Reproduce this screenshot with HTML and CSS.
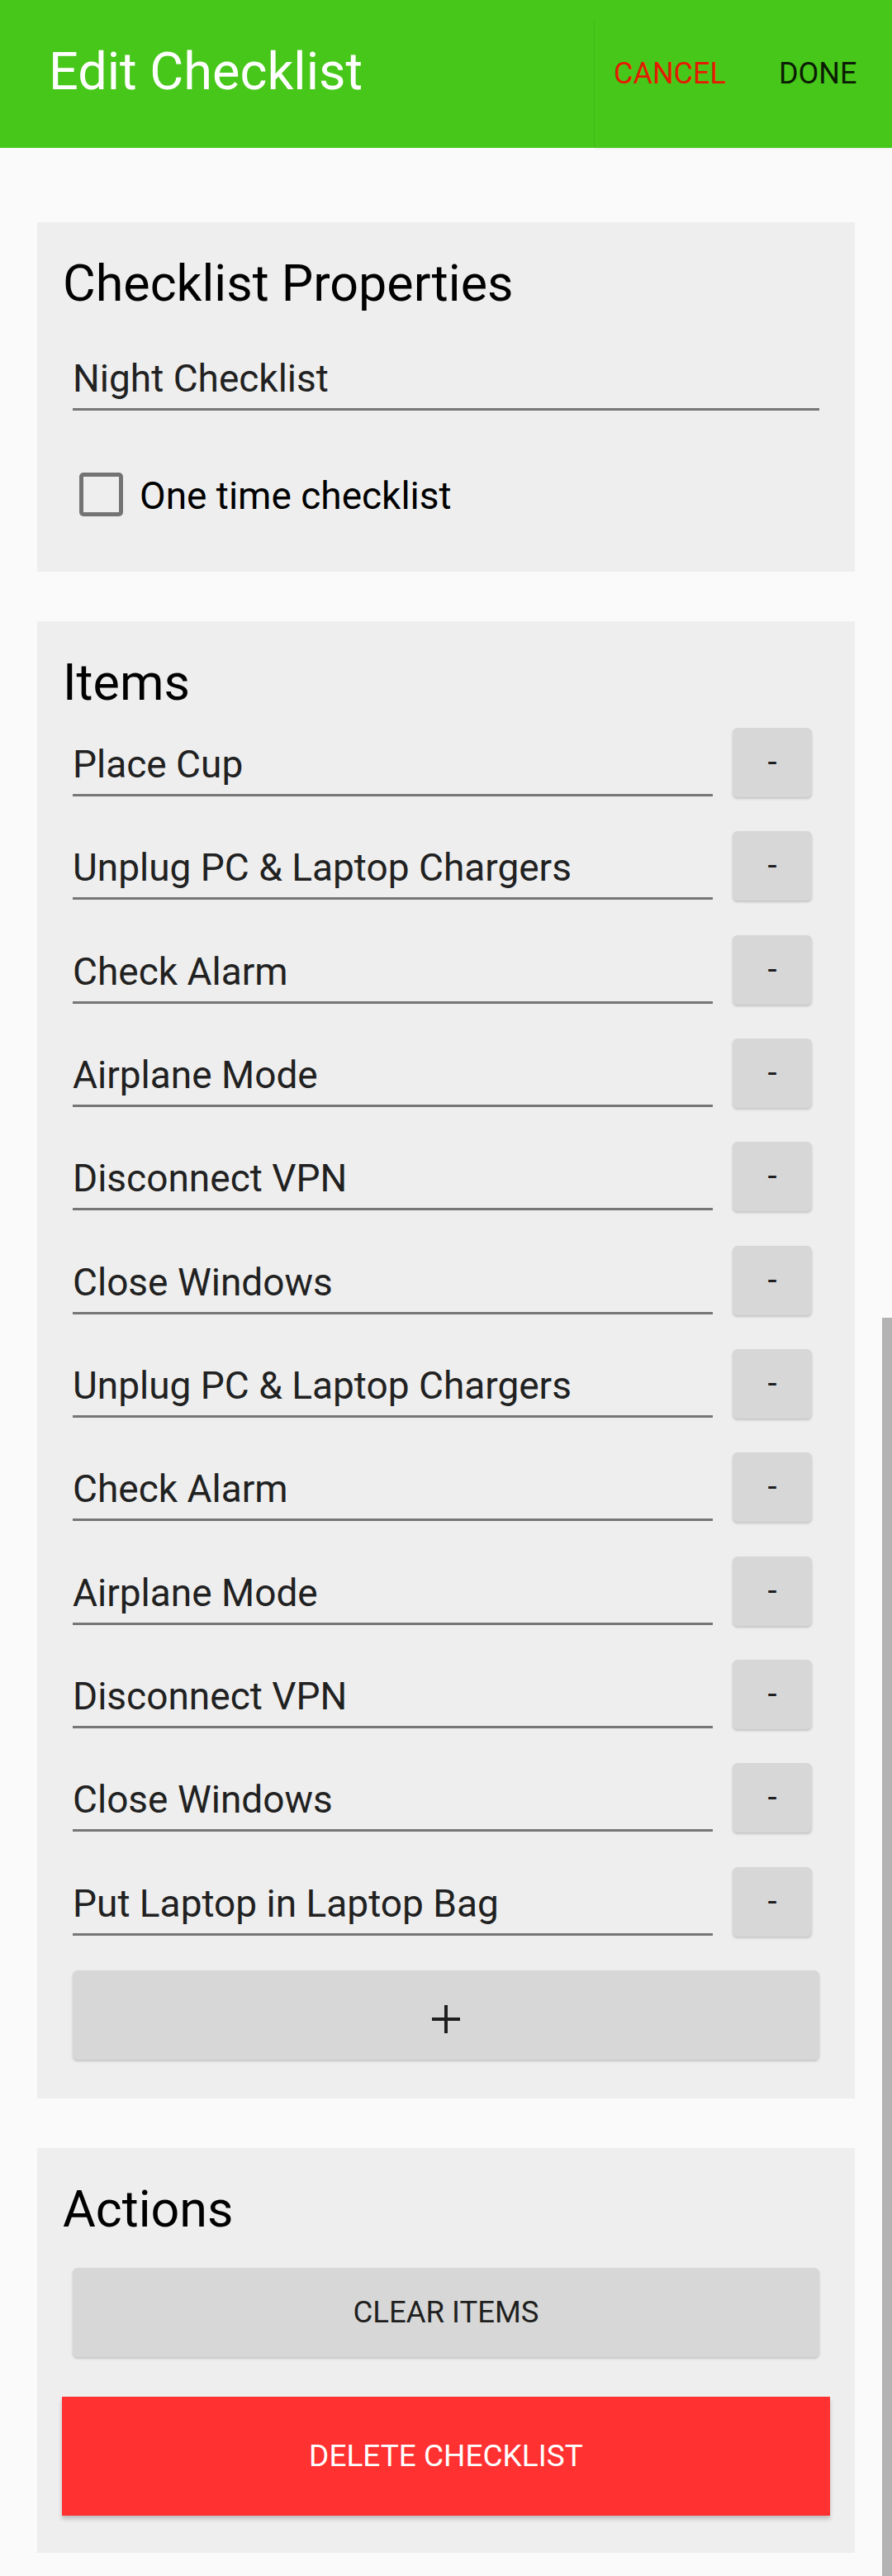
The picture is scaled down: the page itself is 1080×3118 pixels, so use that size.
FILE: index.html
```html
<!DOCTYPE html>
<html lang="en">
<head>
<meta charset="utf-8">
<title>Edit Checklist</title>
<link rel="stylesheet" href="styles.css">
</head>
<body>
<header class="appbar">
  <h1 class="appbar-title">Edit Checklist</h1>
  <nav class="appbar-menu">
    <span class="menu-btn cancel">CANCEL</span>
    <span class="menu-btn done">DONE</span>
  </nav>
</header>

<main class="content">
  <section class="card card-props">
    <h2 class="card-title">Checklist Properties</h2>
    <div class="field name-field"><span class="field-text">Night Checklist</span></div>
    <label class="check-row">
      <span class="checkbox"></span>
      <span class="check-label">One time checklist</span>
    </label>
  </section>

  <section class="card card-items">
    <h2 class="card-title">Items</h2>
    <div class="items">
      <div class="item-row"><div class="field"><span class="field-text">Place Cup</span></div><span class="minus-btn">-</span></div>
      <div class="item-row"><div class="field"><span class="field-text">Unplug PC &amp; Laptop Chargers</span></div><span class="minus-btn">-</span></div>
      <div class="item-row"><div class="field"><span class="field-text">Check Alarm</span></div><span class="minus-btn">-</span></div>
      <div class="item-row"><div class="field"><span class="field-text">Airplane Mode</span></div><span class="minus-btn">-</span></div>
      <div class="item-row"><div class="field"><span class="field-text">Disconnect VPN</span></div><span class="minus-btn">-</span></div>
      <div class="item-row"><div class="field"><span class="field-text">Close Windows</span></div><span class="minus-btn">-</span></div>
      <div class="item-row"><div class="field"><span class="field-text">Unplug PC &amp; Laptop Chargers</span></div><span class="minus-btn">-</span></div>
      <div class="item-row"><div class="field"><span class="field-text">Check Alarm</span></div><span class="minus-btn">-</span></div>
      <div class="item-row"><div class="field"><span class="field-text">Airplane Mode</span></div><span class="minus-btn">-</span></div>
      <div class="item-row"><div class="field"><span class="field-text">Disconnect VPN</span></div><span class="minus-btn">-</span></div>
      <div class="item-row"><div class="field"><span class="field-text">Close Windows</span></div><span class="minus-btn">-</span></div>
      <div class="item-row"><div class="field"><span class="field-text">Put Laptop in Laptop Bag</span></div><span class="minus-btn">-</span></div>
    </div>
    <div class="wide-btn add-btn">
      <svg class="plus-icon" width="34" height="34" viewBox="0 0 34 34"><path d="M17 0V34M0 17H34" stroke="#1f1f1f" stroke-width="4" fill="none"/></svg>
    </div>
  </section>

  <section class="card card-actions">
    <h2 class="card-title">Actions</h2>
    <div class="wide-btn clear-btn">CLEAR ITEMS</div>
    <div class="delete-btn">DELETE CHECKLIST</div>
  </section>
</main>

<div class="scrollbar"></div>
</body>
</html>
```

FILE: styles.css
```css
* { box-sizing: border-box; }

html, body {
  margin: 0;
  padding: 0;
}

body {
  width: 1080px;
  height: 3118px;
  overflow: hidden;
  background: #fafafa;
  font-family: Roboto, "Noto Sans", sans-serif;
  color: #000;
  position: relative;
}

.appbar {
  height: 179px;
  background: #47c71a;
  display: flex;
  align-items: stretch;
}

.appbar-title {
  margin: 0;
  padding: 55px 0 0 59px;
  font-size: 63px;
  line-height: 63px;
  font-weight: 400;
  color: #fff;
  flex: 1;
}

.appbar-menu {
  margin-top: 23px;
  width: 361px;
  display: flex;
  align-items: center;
  padding: 0 0 24px 23px;
  gap: 64px;
  border-left: 1px solid rgba(0, 0, 0, 0.06);
  box-shadow: 0 2px 3px -2px rgba(0, 0, 0, 0.15);
}

.menu-btn {
  font-size: 36px;
  line-height: 36px;
}

.cancel { color: #e41b00; }
.done { color: #0b1c04; }

.content {
  padding: 90px 45px 0;
  display: flex;
  flex-direction: column;
  gap: 60px;
}

.card {
  background: #eeeeee;
  padding: 42px 32px 0;
}

.card-title {
  margin: 0;
  font-size: 61px;
  line-height: 64px;
  font-weight: 400;
  margin-left: -1px;
}

.field {
  border-bottom: 3px solid #767676;
  padding-bottom: 13px;
}

.field-text {
  display: block;
  font-size: 46px;
  line-height: 45px;
  color: #212121;
  white-space: nowrap;
}

.card-props {
  padding-bottom: 67px;
}

.name-field {
  margin: 61px 11px 0;
}

.check-row {
  margin: 75px 0 0 19px;
  display: flex;
  align-items: center;
  gap: 20px;
}

.checkbox {
  width: 53px;
  height: 53px;
  border: 5px solid #737373;
  border-radius: 5px;
  flex: none;
}

.check-label {
  font-size: 46px;
  line-height: 45px;
  padding-top: 4px;
  color: #000;
}

.card-items {
  padding-bottom: 47px;
}

.items {
  margin: 23px 11px 0;
  display: flex;
  flex-direction: column;
  gap: 41.33px;
}

.item-row {
  height: 84px;
  display: flex;
  align-items: flex-start;
  padding-right: 9px;
}

.item-row .field {
  flex: 1;
  margin-top: 22px;
  margin-right: 24px;
}

.minus-btn {
  width: 96px;
  height: 84px;
  flex: none;
  background: #d6d7d6;
  border-radius: 6px;
  box-shadow: 0 2px 3px rgba(0, 0, 0, 0.18);
  display: flex;
  align-items: center;
  justify-content: center;
  font-size: 40px;
  line-height: 40px;
  color: #1f1f1f;
}

.wide-btn {
  margin: 0 11px;
  height: 108px;
  background: #d6d7d6;
  border-radius: 6px;
  box-shadow: 0 2px 3px rgba(0, 0, 0, 0.18);
  display: flex;
  align-items: center;
  justify-content: center;
}

.add-btn {
  margin-top: 41px;
}

.plus-icon {
  margin-top: 10px;
}

.card-actions {
  padding-bottom: 45px;
}

.clear-btn {
  margin-top: 39px;
  font-size: 36.5px;
  color: #1f1f1f;
}

.delete-btn {
  margin: 48px -2px 0;
  height: 144px;
  background: #ff3131;
  color: #fff;
  font-size: 37px;
  display: flex;
  align-items: center;
  justify-content: center;
  box-shadow: 0 4px 5px rgba(0, 0, 0, 0.2);
}

.scrollbar {
  position: absolute;
  right: 0;
  top: 1595px;
  bottom: 0;
  width: 12px;
  background: #b3b3b3;
}
```
